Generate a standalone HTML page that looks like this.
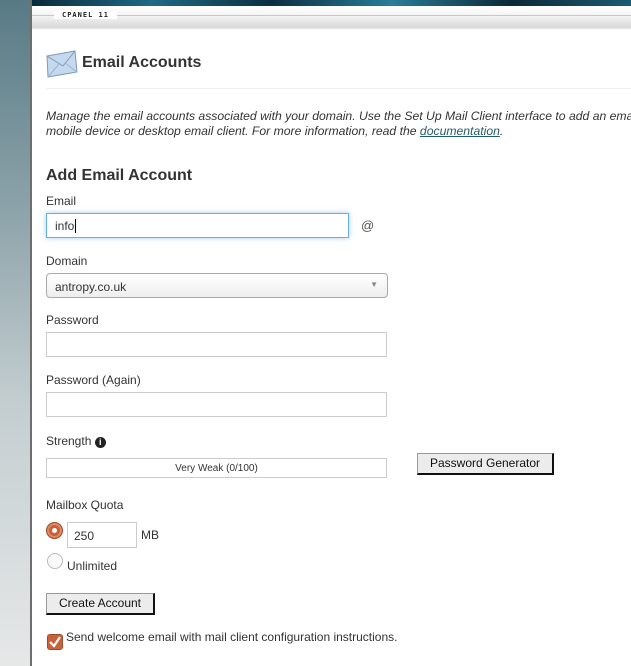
<!DOCTYPE html>
<html><head><meta charset="utf-8"><style>
*{box-sizing:border-box}
body{margin:0;width:631px;height:666px;overflow:hidden;font-family:"Liberation Sans",sans-serif;background:#fff;position:relative;color:#333}
.left{position:absolute;left:0;top:0;width:30px;height:666px;background:linear-gradient(#587a85,#8aa1a8 30%,#c3cdd0 60%,#e6e8e8)}
.vline{position:absolute;left:30px;top:0;width:2px;height:666px;background:#6e6e6e}
.banner{position:absolute;left:32px;top:0;right:0;height:6px;background:linear-gradient(90deg,#0b2a3a,#1f6a86 20%,#0c2e40 40%,#2a7d99 60%,#0b2836 80%,#1b5b73)}
.bar{position:absolute;left:32px;top:6px;right:0;height:24px;background:linear-gradient(#fff,#f4f4f4 40%,#d8d8d8 90%,#fff)}
.bar .ln{position:absolute;left:0;right:0;top:9px;height:1px;background:#c8c8c8}
.bar .lbl{position:absolute;left:22px;top:5px;background:#fff;padding:0 8px;font-size:7px;font-weight:bold;letter-spacing:1px;color:#222;font-family:"DejaVu Sans Mono",monospace}
.abs{position:absolute}
h1{position:absolute;left:82px;top:54px;margin:0;font-size:16px;font-weight:bold;color:#333}
.sep{position:absolute;left:46px;right:0;top:88px;height:1px;background:#eee}
.desc{position:absolute;left:46px;top:109px;width:585px;overflow:hidden;font-size:12.2px;font-style:italic;line-height:15px;white-space:nowrap;color:#333}
.desc a{color:#245b6c;text-decoration:underline}
h2{position:absolute;left:46px;top:167px;margin:0;font-size:16px;font-weight:bold;color:#333}
.l{position:absolute;left:46px;font-size:12px;color:#333}
.inp{position:absolute;left:46px;width:341px;height:25px;border:1px solid #ccc;background:#fff;font-size:12px;padding:5px 8px}
.btn{position:absolute;background:#ececec;border:1px solid #999;border-right:2px solid #111;border-bottom:2px solid #111;font-size:12px;text-align:center;color:#111}
</style></head><body>
<div class="left"></div><div class="vline"></div>
<div class="banner"></div>
<div class="bar"><div class="ln"></div><div class="lbl">CPANEL 11</div></div>
<svg class="abs" style="left:46px;top:50px" width="32" height="28" viewBox="0 0 32 28"><path d="M1 6 L29 1 L31 22 L2 27Z" fill="#c4d8ee" stroke="#7e9ab8"/><path d="M1 6 L17 16 L29 1" fill="none" stroke="#7e9ab8"/><path d="M2 27 L13 14 M31 22 L19 13" stroke="#9cb3cc" fill="none"/></svg>
<h1>Email Accounts</h1>
<div class="sep"></div>
<div class="desc">Manage the email accounts associated with your domain. Use the Set Up Mail Client interface to add an email account to a<br>mobile device or desktop email client. For more information, read the <a>documentation</a>.</div>
<h2>Add Email Account</h2>
<div class="l" style="top:194px">Email</div>
<div class="inp" style="top:213px;width:303px;border-color:#66afe9;box-shadow:0 0 5px rgba(102,175,233,.6)">info<span style="border-left:1px solid #000;margin-left:1px"></span></div>
<div class="abs" style="left:361px;top:218px;font-size:13px;color:#555">@</div>
<div class="l" style="top:254px">Domain</div>
<div class="inp" style="top:273px;width:342px;border-radius:4px;border-color:#aaa;background:linear-gradient(#fff,#eee);padding-top:6px">antropy.co.uk<span style="position:absolute;right:9px;top:6px;font-size:8px;color:#888">▼</span></div>
<div class="l" style="top:313px">Password</div>
<div class="inp" style="top:332px"></div>
<div class="l" style="top:373px">Password (Again)</div>
<div class="inp" style="top:392px"></div>
<div class="l" style="top:434px">Strength <span style="display:inline-block;width:11px;height:11px;border-radius:50%;background:#222;color:#fff;font-size:9px;font-weight:bold;text-align:center;line-height:11px;vertical-align:0px">i</span></div>
<div class="inp" style="top:458px;height:20px;padding:4px 0;text-align:center;font-size:10px;color:#333">Very Weak (0/100)</div>
<div class="btn" style="left:417px;top:453px;width:137px;height:22px;line-height:18px">Password Generator</div>
<div class="l" style="top:498px">Mailbox Quota</div>
<div class="abs" style="left:46px;top:522px;width:17px;height:17px;border-radius:50%;background:#c8623a;border:1px solid #a04a2a;box-shadow:inset 0 0 0 2px #e08a66"><div style="position:absolute;left:5px;top:5px;width:5px;height:5px;border-radius:50%;background:#fff"></div></div>
<div class="inp" style="left:67px;top:522px;width:70px;height:26px;padding:6px 6px">250</div>
<div class="abs" style="left:141px;top:528px;font-size:12px">MB</div>
<div class="abs" style="left:47px;top:553px;width:16px;height:16px;border-radius:50%;border:1px solid #bbb;background:#fafafa"></div>
<div class="abs" style="left:67px;top:559px;font-size:12px">Unlimited</div>
<div class="btn" style="left:46px;top:593px;width:109px;height:22px;line-height:18px">Create Account</div>
<div class="abs" style="left:47px;top:634px;width:16px;height:16px;border-radius:3px;background:#c8623a;border:1px solid #a04a2a"><svg width="14" height="14" viewBox="0 0 14 14" style="position:absolute;left:0;top:0"><path d="M2 7 L6 11 L12 2" stroke="#fff" stroke-width="2.2" fill="none"/></svg></div>
<div class="abs" style="left:66px;top:630px;font-size:12px">Send welcome email with mail client configuration instructions.</div>
</body></html>
